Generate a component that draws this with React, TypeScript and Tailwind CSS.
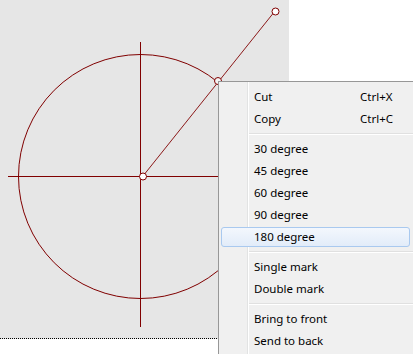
const FONT = { fontFamily: '"Noto Sans", "Open Sans", sans-serif' }

type Item = { label: string; shortcut?: string; active?: boolean } | 'sep'

const ITEMS: Item[] = [
  { label: 'Cut', shortcut: 'Ctrl+X' },
  { label: 'Copy', shortcut: 'Ctrl+C' },
  'sep',
  { label: '30 degree' },
  { label: '45 degree' },
  { label: '60 degree' },
  { label: '90 degree' },
  { label: '180 degree', active: true },
  'sep',
  { label: 'Single mark' },
  { label: 'Double mark' },
  'sep',
  { label: 'Bring to front' },
  { label: 'Send to back' },
]

function Drawing() {
  const red = '#800000'
  return (
    <svg width={289} height={338} viewBox="0 0 289 338" className="block">
      {/* circle + cross */}
      <circle cx={140.5} cy={176.5} r={122} fill="none" stroke={red} strokeWidth={1} />
      <line x1={8} y1={176.5} x2={289} y2={176.5} stroke={red} strokeWidth={1} />
      <line x1={140.5} y1={42} x2={140.5} y2={327} stroke={red} strokeWidth={1} />
      {/* radius handle */}
      <line x1={143} y1={176} x2={275} y2={11} stroke={red} strokeWidth={0.9} />
      <circle cx={143} cy={176.5} r={3.5} fill="#ffffff" stroke={red} strokeWidth={1} />
      <circle cx={218} cy={81} r={3.5} fill="#f4f4f4" stroke={red} strokeWidth={1} />
      <circle cx={275.5} cy={11.5} r={3.5} fill="#ffffff" stroke={red} strokeWidth={1} />
    </svg>
  )
}

function ContextMenu() {
  return (
    <div
      className="absolute left-[218px] top-[81px] flex w-[220px] flex-col border border-[#979797] bg-[#f0f0f0] bg-[linear-gradient(to_right,#f0f0f0_28px,#e2e3e3_28px,#e2e3e3_29px,#ffffff_29px,#ffffff_30px,#f0f0f0_30px)] py-[4px] text-[11.5px] text-black"
      style={FONT}
    >
      {ITEMS.map((it, i) =>
        it === 'sep' ? (
          <div key={i} className="h-[8px] pl-[30px] pr-[2px] pt-[3px]">
            <div className="h-[1px] bg-[#e0e0e0]" />
            <div className="h-[1px] bg-white" />
          </div>
        ) : (
          <div key={i} className="relative h-[22px] px-[2px]">
            {it.active && (
              <div className="absolute left-[2px] right-[27px] top-[1px] bottom-[1px] rounded-[3px] border border-[#a9c9ef] bg-linear-to-b from-[#f3f7fd] to-[#e2ecf9]" />
            )}
            <div className="relative flex h-full items-center pl-[33px] leading-none">
              <span className="w-[106px]">{it.label}</span>
              {it.shortcut && <span>{it.shortcut}</span>}
            </div>
          </div>
        )
      )}
    </div>
  )
}

export default function App() {
  return (
    <div className="relative h-[354px] w-[413px] overflow-hidden bg-white">
      <div className="w-[289px] border-b border-dotted border-black bg-[#e6e6e6]">
        <Drawing />
      </div>
      <ContextMenu />
    </div>
  )
}
